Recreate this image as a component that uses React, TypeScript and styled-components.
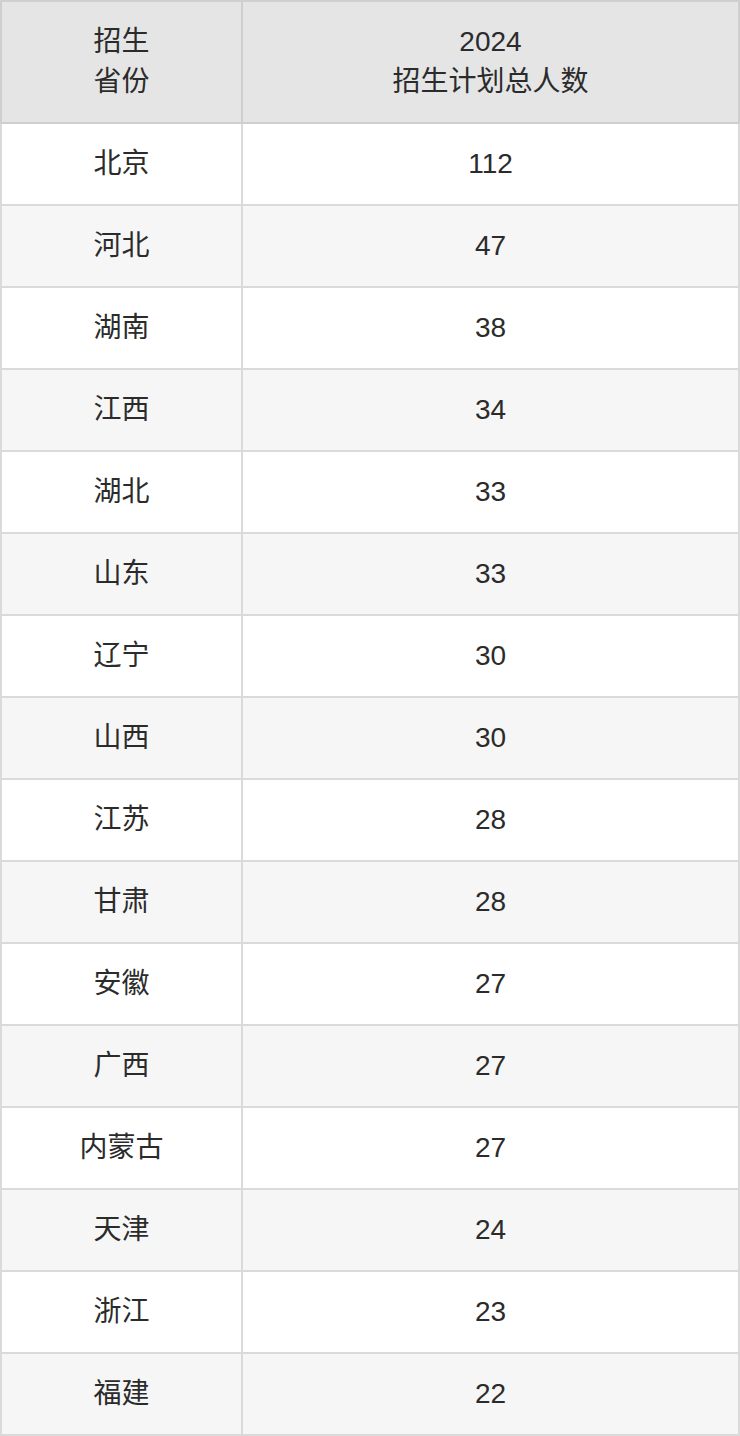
import styled, { createGlobalStyle } from 'styled-components';

const rows: [string, number][] = [
  ['北京', 112],
  ['河北', 47],
  ['湖南', 38],
  ['江西', 34],
  ['湖北', 33],
  ['山东', 33],
  ['辽宁', 30],
  ['山西', 30],
  ['江苏', 28],
  ['甘肃', 28],
  ['安徽', 27],
  ['广西', 27],
  ['内蒙古', 27],
  ['天津', 24],
  ['浙江', 23],
  ['福建', 22],
];

const App = () => {
  return (
    <>
      <GlobalStyle />
      <Table>
        <colgroup>
          <ProvinceCol />
          <col />
        </colgroup>
        <thead>
          <tr>
            <HeadCell>
              招生
              <br />
              省份
            </HeadCell>
            <HeadCell>
              2024
              <br />
              招生计划总人数
            </HeadCell>
          </tr>
        </thead>
        <tbody>
          {rows.map(([name, num], index) => (
            <Row key={name} $striped={index % 2 === 1}>
              <Cell>{name}</Cell>
              <Cell>{num}</Cell>
            </Row>
          ))}
        </tbody>
      </Table>
    </>
  );
};

const GlobalStyle = createGlobalStyle`
  html, body {
    margin: 0;
    padding: 0;
    background: #fff;
  }
  body {
    font-family: "Liberation Sans", "Noto Sans CJK SC", sans-serif;
    color: #2b2b2b;
  }
`;

const Table = styled.table`
  width: 740px;
  border-collapse: collapse;
  table-layout: fixed;
  border: 2px solid #d9d9d9;
`;

const ProvinceCol = styled.col`
  width: 241px;
`;

const HeadCell = styled.th`
  height: 80px;
  padding: 20px 0;
  background-color: #e5e5e5;
  border: 2px solid #cfcfcf;
  font-size: 28px;
  font-weight: 400;
  line-height: 40px;
  text-align: center;
  color: #2b2b2b;
`;

const Row = styled.tr<{ $striped: boolean }>`
  background-color: ${(p) => (p.$striped ? '#f6f6f6' : '#ffffff')};
`;

const Cell = styled.td`
  height: 40px;
  padding: 20px 0;
  border: 2px solid #dadada;
  font-size: 28px;
  line-height: 40px;
  text-align: center;
  color: #2b2b2b;
`;

export default App;
